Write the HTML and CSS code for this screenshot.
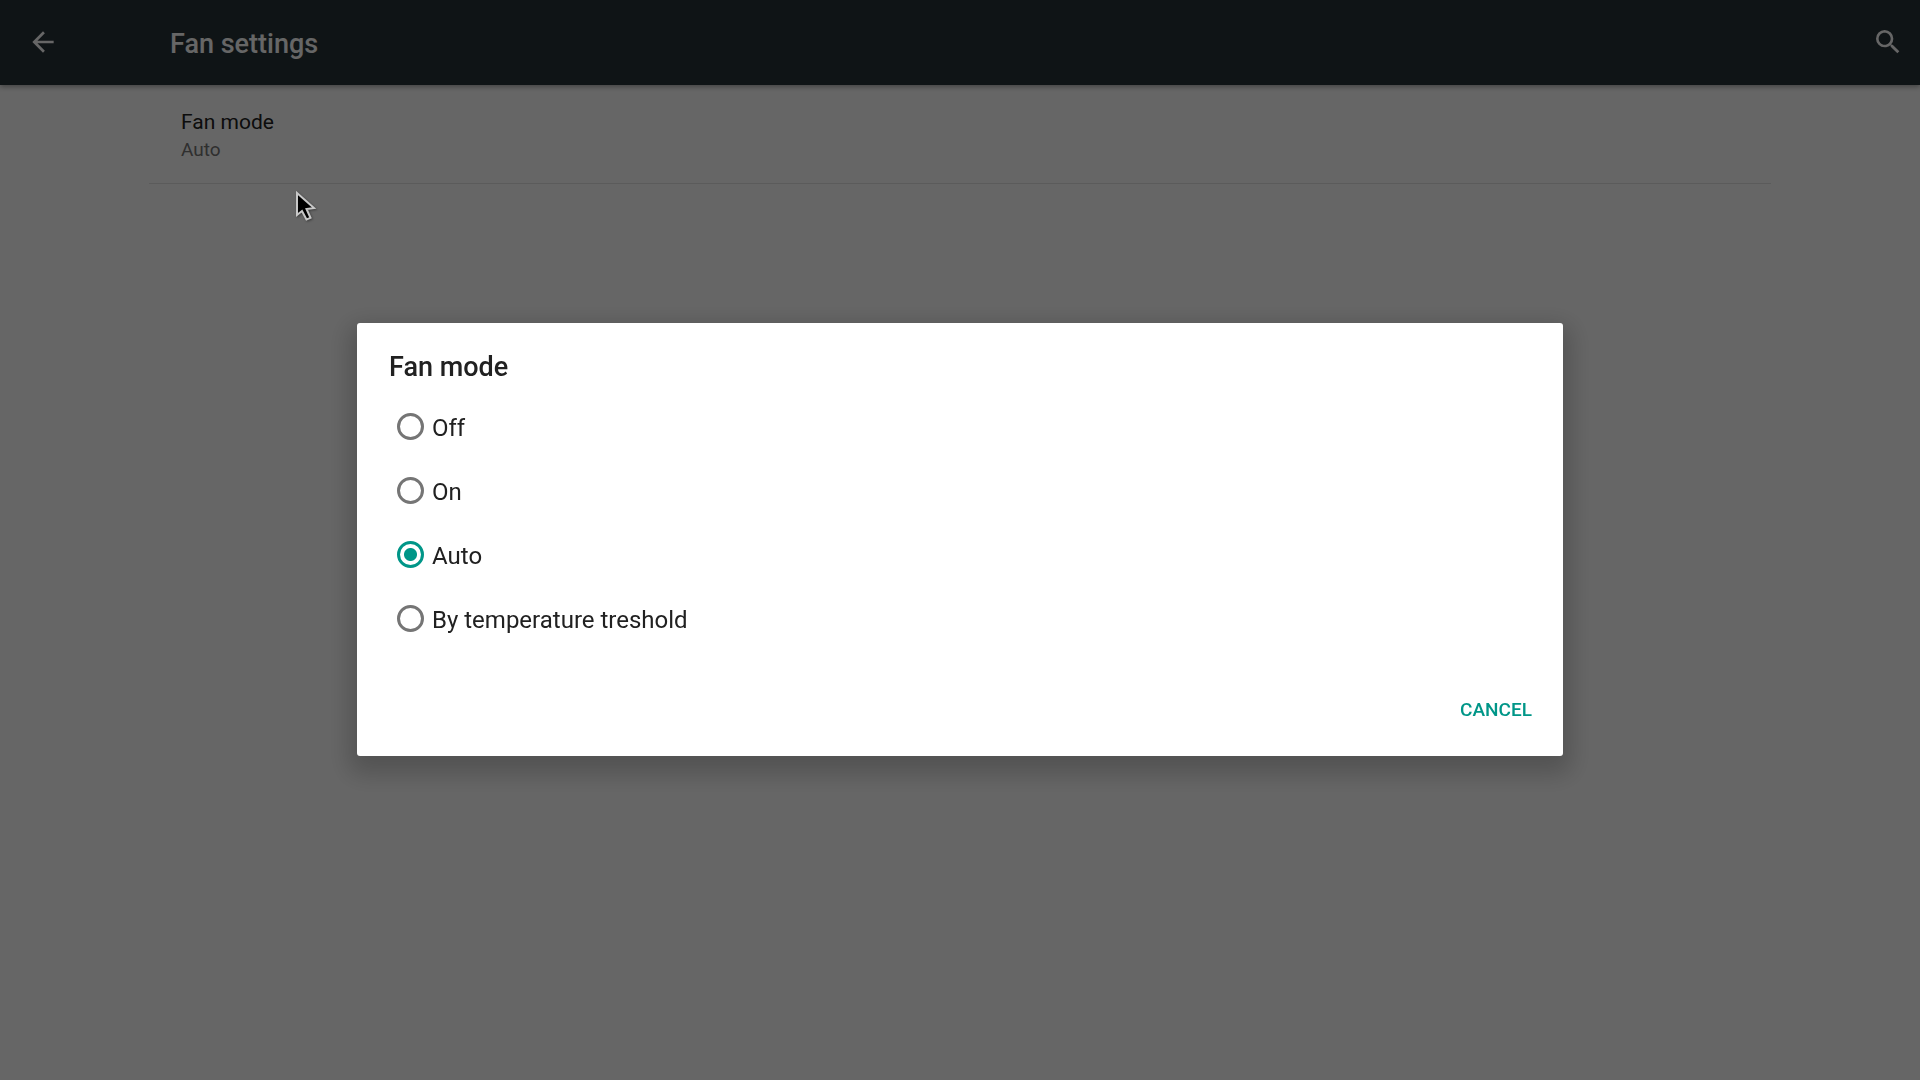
FILE: index.html
```html
<!DOCTYPE html>
<html lang="en">
<head>
    <meta charset="UTF-8">
    <meta name="viewport" content="width=device-width, initial-scale=1.0">
    <title>Fan settings</title>
    <link rel="stylesheet" href="styles.css">
</head>
<body>
    <header class="toolbar">
        <button class="icon-btn" aria-label="Back">
            <svg viewBox="0 0 24 24"><path d="M20 11H7.83l5.59-5.59L12 4l-8 8 8 8 1.41-1.41L7.83 13H20v-2z"/></svg>
        </button>
        <h1>Fan settings</h1>
        <button class="icon-btn" aria-label="Search">
            <svg viewBox="0 0 24 24"><path d="M15.5 14h-.79l-.28-.27A6.47 6.47 0 0 0 16 9.5 6.5 6.5 0 1 0 9.5 16c1.61 0 3.09-.59 4.23-1.57l.27.28v.79l5 4.99L20.49 19l-4.99-5zm-6 0C7.01 14 5 11.99 5 9.5S7.01 5 9.5 5 14 7.01 14 9.5 11.99 14 9.5 14z"/></svg>
        </button>
    </header>

    <main class="settings">
        <button class="setting">
            <span class="setting-title">Fan mode</span>
            <span class="setting-value">Auto</span>
        </button>
    </main>

    <div class="scrim">
        <form class="dialog" role="dialog" aria-labelledby="dialog-title">
            <h2 id="dialog-title">Fan mode</h2>
            <div class="options">
                <label class="option"><input type="radio" name="mode" value="off">Off</label>
                <label class="option"><input type="radio" name="mode" value="on">On</label>
                <label class="option"><input type="radio" name="mode" value="auto" checked>Auto</label>
                <label class="option"><input type="radio" name="mode" value="temp">By temperature treshold</label>
            </div>
            <div class="actions">
                <button type="button" class="btn">CANCEL</button>
            </div>
        </form>
    </div>

    <!-- Mouse pointer -->
    <svg class="pointer" viewBox="0 0 24 34">
        <path d="M2 2V24L7 20L11.500 28.500L15.500 26.800L11.500 18L19 17Z"/>
    </svg>
</body>
</html>
```
FILE: styles.css
```css
* {
    box-sizing: border-box;
}
body {
    margin: 0;
    min-height: 100vh;
    font-family: Roboto, sans-serif;
    background: white;
    color: #212121;
}
button {
    font-family: inherit;
    border: none;
    background: none;
    cursor: pointer;
}
.toolbar {
    display: flex;
    align-items: center;
    height: 85px;
    padding: 0 16px 0 27px;
    background: #263238;
    color: white;
    box-shadow: 0 2px 5px rgba(0, 0, 0, 0.35);
}
.toolbar h1 {
    flex: 1;
    margin: 0 0 0 111px;
    padding-top: 2px;
    font-size: 27px;
    font-weight: 500;
    line-height: 32px;
}
.icon-btn {
    width: 32px;
    height: 33px;
    padding: 0 0 1px;
}
.icon-btn svg {
    display: block;
    fill: white;
}
.settings {
    padding: 0 149px;
}
.setting {
    display: block;
    width: 100%;
    padding: 23px 32px 20px;
    border-bottom: 1px solid #e4e4e4;
    text-align: left;
}
.setting span {
    display: block;
}
.setting-title {
    font-size: 21px;
    line-height: 28px;
    color: #212121;
}
.setting-value {
    font-size: 19px;
    line-height: 27px;
    color: #757575;
}
.scrim {
    position: fixed;
    inset: 0;
    display: flex;
    align-items: center;
    justify-content: center;
    padding-bottom: 1px;
    background: rgba(0, 0, 0, 0.6);
}
.dialog {
    width: calc(65% - 42px);
    padding: 28px 16px 23px 32px;
    border-radius: 3px;
    background: white;
    box-shadow: 0 10px 24px 8px rgba(0, 0, 0, 0.2);
}
.dialog h2 {
    margin: 0 0 12px;
    font-size: 27px;
    font-weight: 500;
    line-height: 32px;
}
.option {
    display: flex;
    align-items: center;
    height: 64px;
    padding: 2px 0 0 8px;
    font-size: 24px;
    cursor: pointer;
}
.option input {
    appearance: none;
    width: 27px;
    height: 27px;
    margin: 0 8px 3px 0;
    border: 3px solid #757575;
    border-radius: 50%;
}
.option input:checked {
    border-color: #009688;
    background: radial-gradient(circle, #009688 6px, transparent 7px);
}
.actions {
    display: flex;
    justify-content: flex-end;
    margin-top: 34px;
}
.btn {
    height: 48px;
    padding: 0 15px;
    font-size: 19px;
    font-weight: 500;
    color: #009688;
}
.pointer {
    position: absolute;
    left: 295px;
    top: 191px;
    width: 24px;
    height: 34px;
    fill: black;
    stroke: #c8c8c8;
    stroke-width: 2;
    filter: drop-shadow(1px 1px 1px rgba(0, 0, 0, 0.4));
    pointer-events: none;
}
```
